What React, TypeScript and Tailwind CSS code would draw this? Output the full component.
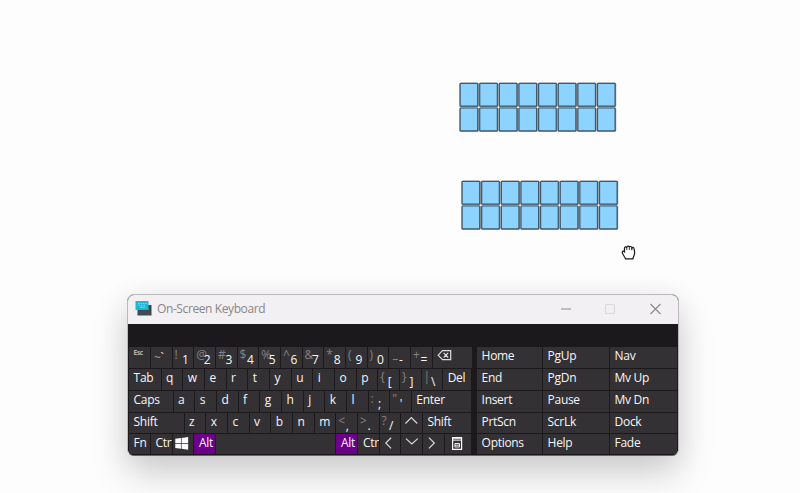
import type { ReactNode } from "react";

type KeyProps = { w: string; label?: ReactNode; alt?: string; active?: boolean; icon?: ReactNode };

function Key({ w, label, alt, active, icon }: KeyProps) {
  return (
    <div className={`${w} h-full shrink-0 pr-px`}>
      <div className={`relative flex h-full overflow-hidden ${active ? "bg-[#690087]" : "bg-[#333134]"}`}>
        {alt !== undefined ? (
          <>
            <span className="absolute top-[1px] left-[2px] leading-[13px] text-[#848285]">{alt}</span>
            <span className="absolute top-[6px] left-[9.5px] leading-[13px]">{label}</span>
          </>
        ) : icon ? (
          icon
        ) : (
          <span className="pt-[var(--drop)] pl-[4.6px] leading-[14px] whitespace-nowrap">{label}</span>
        )}
      </div>
    </div>
  );
}

function Chevron({ d }: { d: string }) {
  return (
    <svg className="h-[20px] w-[21px]" viewBox="0 0 21 20" fill="none" stroke="#d9d8da" strokeWidth="1.2">
      <path d={d} />
    </svg>
  );
}

const backspace = (
  <svg className="h-[21px] w-[38px]" viewBox="0 0 38 21" fill="none" stroke="#dddcde" strokeWidth="1.2">
    <path d="M9.500 3.700h8.200v9H9.500L5.200 8.200zM10.600 5.900l4.600 4.600M15.200 5.900l-4.600 4.600" />
  </svg>
);

const windowsLogo = (
  <svg className="h-[21px] w-[21px]" viewBox="0 0 21 21" fill="#fff">
    <path d="M2.300 4.800l5.700-.8v5H2.300zM8.700 3.900l6.600-.9v6H8.700zM2.300 9.800H8v5.100l-5.700-.8zM8.700 9.800h6.600v6l-6.600-.9z" />
  </svg>
);

const menuIcon = (
  <svg className="h-[21px] w-[26px]" viewBox="0 0 26 21" fill="none" stroke="#fff" strokeWidth="1.2">
    <path d="M7.600 3.600h9v11.800h-9z" />
    <path d="M7.600 4.200h9M7.600 6.100h9" strokeWidth="1" />
    <path d="M9.900 9.500h4.600v3.500H9.900zM9.900 11.200h4.600" strokeWidth=".9" />
  </svg>
);

const navKeys = [
  ["Home", "PgUp", "Nav"],
  ["End", "PgDn", "Mv Up"],
  ["Insert", "Pause", "Mv Dn"],
  ["PrtScn", "ScrLk", "Dock"],
  ["Options", "Help", "Fade"],
];

// Baseline drop for each key row
const drops = ["[--drop:1.5px]", "[--drop:2.2px]", "[--drop:1.5px]", "[--drop:2px]", "[--drop:2px]"];

function Letters({ keys }: { keys: string }) {
  return keys.split("").map((k) => <Key key={k} w="w-[21.68px]" label={k} />);
}

const digits: [string, string][] = [
  ["!", "1"], ["@", "2"], ["#", "3"], ["$", "4"], ["%", "5"], ["^", "6"], ["&", "7"], ["*", "8"], ["(", "9"], [")", "0"],
];

function MainKeys() {
  return (
    <div className="grid w-[343px] grid-rows-[22px_22px_21.5px_21.5px_21px] [&>div]:flex [&>div]:min-h-0 [&>div]:pb-px">
      <div className={drops[0]}>
        <Key w="w-[21.9px]" label={<span className="block text-[6.5px] leading-[8px] font-bold text-[#b5b4b6]">Esc</span>} />
        <Key w="w-[21.68px]" icon={<span className="pt-[4px] pl-[3px] leading-[13px]"><span className="text-[#98969a]">~</span>`</span>} />
        {digits.map(([a, k]) => (
          <Key key={k} w="w-[21.68px]" alt={a} label={k} />
        ))}
        <Key w="w-[21.68px]" icon={<><span className="pt-[5px] pl-[3px] leading-[13px] text-[#848285]">–</span><span className="pt-[6px] pl-[1px] leading-[13px]">-</span></>} />
        <Key w="w-[21.68px]" alt="+" label="=" />
        <Key w="w-[40px]" icon={backspace} />
      </div>
      <div className={drops[1]}>
        <Key w="w-[32.5px]" label="Tab" />
        <Letters keys="qwertyuiop" />
        <Key w="w-[21.68px]" alt="{" label="[" />
        <Key w="w-[21.68px]" alt="}" label="]" />
        <Key w="w-[21.5px]" alt="|" label="\" />
        <Key w="w-[29px]" label="Del" />
      </div>
      <div className={drops[2]}>
        <Key w="w-[44.5px]" label="Caps" />
        <Letters keys="asdfghjkl" />
        <Key w="w-[21.68px]" alt=":" label=";" />
        <Key w="w-[21.5px]" alt={'"'} label="'" />
        <Key w="w-[60px]" label="Enter" />
      </div>
      <div className={drops[3]}>
        <Key w="w-[55.5px]" label="Shift" />
        <Letters keys="zxcvbnm" />
        <Key w="w-[21.68px]" alt="<" label="," />
        <Key w="w-[21.68px]" alt=">" label="." />
        <Key w="w-[21.68px]" alt="?" label="/" />
        <Key w="w-[21.68px]" icon={<Chevron d="M4.500 10.500l6-6 6 6" />} />
        <Key w="w-[49px]" label="Shift" />
      </div>
      <div className={drops[4]}>
        <Key w="w-[22px]" label="Fn" />
        <Key w="w-[21.5px]" label="Ctrl" />
        <Key w="w-[21.8px]" icon={windowsLogo} />
        <Key w="w-[21.7px]" label="Alt" active />
        <Key w="w-[120.5px]" />
        <Key w="w-[22px]" label="Alt" active />
        <Key w="w-[21.5px]" label="Ctrl" />
        <Key w="w-[21.3px]" icon={<Chevron d="M11.500 3.500L6 9l5.500 5.500" />} />
        <Key w="w-[21.7px]" icon={<Chevron d="M5 4.500l6 5.500 6-5.500" />} />
        <Key w="w-[21.7px]" icon={<Chevron d="M6 3.500L11.500 9 6 14.500" />} />
        <Key w="w-[27.5px]" icon={menuIcon} />
      </div>
    </div>
  );
}

function Board() {
  return (
    <svg className="block h-[50px] w-[160px]" viewBox="0 0 160 50">
      {[0, 1].map((r) =>
        Array.from({ length: 8 }, (_, c) => (
          <g key={`${r}-${c}`}>
            <rect x={0.5 + c * 19.63} y={0.7 + r * 24.7} width="19.3" height="24.4" rx="1.5" fill="#848789" />
            <rect x={1.1 + c * 19.63} y={1.3 + r * 24.7} width="17.6" height="22.9" rx="0.6" fill="#8cd3ff" stroke="#40586a" strokeWidth="1.2" />
          </g>
        )),
      )}
    </svg>
  );
}

export default function App() {
  return (
    <main className="relative h-[493px] w-[800px] overflow-hidden bg-[#fefdfe] font-['Open_Sans','Noto_Sans',sans-serif]">
      <div className="absolute top-[82px] left-[458.5px]"><Board /></div>
      <div className="absolute top-[180px] left-[460.5px]"><Board /></div>

      <svg className="absolute top-[244px] left-[621px] h-[17px] w-[16px]" viewBox="0 0 16 17">
        <path
          d="M4.500 14.800C3.800 12.600 1.400 10.500 1.300 8.300c0-1.300 1.300-1.700 2.200-.6V4.300c0-1.700 1.800-2 2.300-.6.1-2 2.300-2.200 2.600-.3.5-1.500 2.400-1.100 2.500.7.7-1.200 2.100-.6 2.200.8.500 2.400 1.300 4.500-.4 7.300l-.8 2.600z"
          fill="#fff" stroke="#1b1b1b" strokeWidth="1.25"
        />
        <path d="M5.800 3.800v2.200M8.400 3.600v2.300M10.900 4.200v2.100" stroke="#1b1b1b" strokeWidth=".9" />
      </svg>

      <section className="absolute top-[293.5px] left-[127px] flex h-[162.5px] w-[552px] flex-col overflow-hidden rounded-[7px] border border-[#bbb9bc] border-b-[#666468] bg-[#1b191c] shadow-[0_18px_36px_rgba(0,0,0,0.18),0_2px_30px_rgba(0,0,0,0.06)]">
        <header className="flex h-[29.5px] shrink-0 items-center bg-[#f2f0f3] pl-[7px]">
          <svg className="h-[17px] w-[17px]" viewBox="0 0 17 17">
            <path d="M2.500 4h14v10.500h-14z" fill="#3b4650" />
            <path d="M4 11h11M4 13h11" stroke="#4c5861" strokeWidth=".7" />
            <path d="M.5 0h13v9H.5z" fill="#20b5d5" />
            <path d="M3 2.500h1.500m1 0H7m1 0h1.500m1 0H12M3.500 4.300H5m1 0h1.500m1 0H10M5 6.200h5" stroke="#8de6f4" strokeWidth=".8" />
          </svg>
          <h1 className="ml-[5px] text-[12px] leading-[16px] tracking-[-0.4px] whitespace-nowrap text-[#88868a]">On-Screen Keyboard</h1>
          <svg className="ml-auto h-[29px] w-[130px] shrink-0" viewBox="0 0 130 29" fill="none" stroke="#8b898c" strokeWidth="1.1">
            <path d="M13 14h10" />
            <rect x="57.5" y="9.500" width="9" height="9" rx="1" stroke="#dad8db" />
            <path d="M102.500 9l10 10M112.500 9l-10 10" />
          </svg>
        </header>
        <div className="flex h-[131px] shrink-0 bg-[#1b191c] pt-[23px] pl-px text-[12px] tracking-[-0.3px] text-[#f7f6f8]">
          <MainKeys />
          <div className="ml-[5px] grid grid-cols-[66px_67px_68px] grid-rows-[22px_22px_21.5px_21.5px_21px]">
            {navKeys.map((row, r) =>
              row.map((label) => (
                <div key={label} className={`pr-px pb-px ${drops[r]}`}>
                  <div className="h-full bg-[#333134] pt-[var(--drop)] pl-[4.6px] leading-[14px] whitespace-nowrap">{label}</div>
                </div>
              )),
            )}
          </div>
        </div>
      </section>
    </main>
  );
}
